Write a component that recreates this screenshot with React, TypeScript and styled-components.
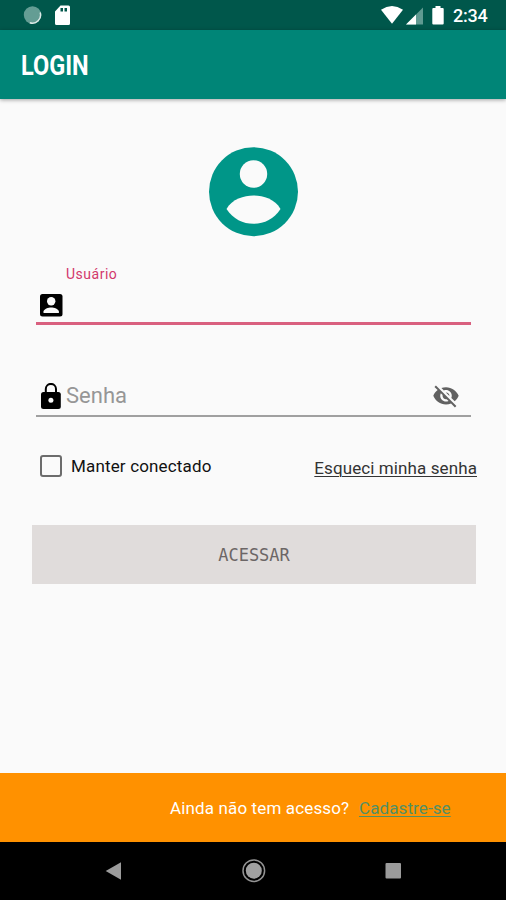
import React from "react";
import styled, { createGlobalStyle } from "styled-components";

const GlobalStyle = createGlobalStyle`
  *, *::before, *::after { box-sizing: border-box; }
  html, body { margin: 0; padding: 0; background: #fafafa; }
  body { font-family: Roboto, "Liberation Sans", sans-serif; }
  svg { display: block; flex: none; }
`;

const Screen = styled.div`
  display: flex;
  flex-direction: column;
  width: 506px;
  height: 900px;
  overflow: hidden;
  background: #fafafa;
`;

const StatusBar = styled.header`
  display: flex;
  align-items: center;
  flex: none;
  height: 30px;
  padding: 0 18px 0 23px;
  background: #00574b;
`;

const StatusGroup = styled.div<{ $end?: boolean }>`
  display: flex;
  align-items: center;
  margin-left: ${(p) => (p.$end ? "auto" : "0")};
`;

const Clock = styled.span`
  width: 35px;
  margin-left: 9px;
  padding-top: 2px;
  color: #fff;
  font-size: 18px;
  font-weight: 500;
  line-height: 20px;
  letter-spacing: -0.2px;
  white-space: nowrap;
`;

const AppBar = styled.div`
  display: flex;
  align-items: center;
  flex: none;
  height: 68.5px;
  padding: 4px 21px 0;
  background: #008577;
  box-shadow: 0 1px 4px rgba(0, 0, 0, 0.36);
`;

const Title = styled.h1`
  margin: 0;
  color: #fff;
  font-size: 28px;
  font-weight: 700;
  line-height: 32px;
  transform: scaleX(0.84);
  transform-origin: left center;
`;

const Content = styled.main`
  display: flex;
  flex-direction: column;
  flex: 1;
  padding: 48.5px 30px 0 32px;
`;

const Avatar = styled.div`
  display: flex;
  height: 90px;
  padding-left: 177px;
`;

const Field = styled.label<{ $active?: boolean }>`
  display: flex;
  flex-direction: column;
  margin: ${(p) => (p.$active ? "28px 5px 0 4px" : "53px 5px 0 4px")};
  border-bottom: ${(p) => (p.$active ? "3px solid #d9607f" : "2px solid #a0a0a0")};
`;

const FloatingLabel = styled.span`
  height: 18px;
  padding-left: 30px;
  color: #d2386c;
  font-size: 14px;
  line-height: 18px;
  letter-spacing: 0.5px;
`;

const FieldRow = styled.span<{ $height: number }>`
  display: flex;
  align-items: center;
  height: ${(p) => p.$height}px;
  padding: 0 11px 0 1px;
`;

const Placeholder = styled.span`
  flex: 1;
  margin-left: 1px;
  padding-bottom: 2px;
  color: #969696;
  font-size: 22px;
  line-height: 26px;
`;

const Options = styled.div`
  display: flex;
  align-items: center;
  height: 26px;
  margin-top: 36px;
  padding-left: 8px;
`;

const Checkbox = styled.span`
  width: 22px;
  height: 22px;
  margin-right: 9px;
  border: 2px solid #6c6c6c;
  border-radius: 3px;
`;

const OptionLabel = styled.span`
  color: #111;
  font-size: 17px;
  line-height: 22px;
  letter-spacing: 0.16px;
`;

const TextLink = styled.a<{ $color: string }>`
  color: ${(p) => p.$color};
  font-size: 17px;
  line-height: 22px;
  letter-spacing: 0.1px;
  text-decoration: underline;
  text-decoration-thickness: 1px;
  text-underline-offset: 2px;
  white-space: nowrap;
`;

const ForgotSlot = styled.div`
  margin-left: auto;
  margin-right: -1px;
  padding-top: 4px;
`;

const SubmitButton = styled.button`
  height: 59px;
  margin-top: 46px;
  padding: 0;
  border: 0;
  background: #e0dcdb;
  color: #6c6666;
  font: 17px/22px "DejaVu Sans Mono", monospace;
`;

const SignupBar = styled.footer`
  display: flex;
  align-items: center;
  flex: none;
  height: 69.5px;
  padding: 2px 0 0 170px;
  background: #ff9100;
`;

const SignupText = styled.span`
  width: 189px;
  color: #fff;
  font-size: 17px;
  line-height: 22px;
  letter-spacing: 0.14px;
  white-space: nowrap;
`;

const NavBar = styled.nav`
  display: flex;
  align-items: center;
  justify-content: space-between;
  flex: none;
  height: 58px;
  padding: 0 104px 0 105px;
  background: #000;
`;

const App = () => (
  <>
    <GlobalStyle />
    <Screen>
      <StatusBar>
        <StatusGroup>
          <svg width="19" height="20" viewBox="0 0 19 20">
            <circle cx="9.5" cy="10" r="8.7" fill="#649d94" />
            <path d="M17.2 7.5A8.2 8.2 0 0 1 6.8 17.7" fill="none" stroke="#dbe9e6" strokeWidth="1.5" />
          </svg>
          <svg width="40" height="22" viewBox="0 0 40 22">
            <path
              fill="#fff"
              fillRule="evenodd"
              d="M18.5 1.5h8q1.5 0 1.5 1.5v16.5q0 1.5-1.5 1.5h-12q-1.5 0-1.5-1.5V7.5zM18.500 4v3.500h2.500v-3.500zM22.500 4v3.500h2.500v-3.500z"
            />
          </svg>
        </StatusGroup>
        <StatusGroup $end>
          <svg width="63" height="20" viewBox="0 0 63 20">
            <path fill="#fff" d="M0 4.8Q11 -2.6 22 4.8L11 18.8z" />
            <path fill="#5f9a91" d="M42 2.5v17H25z" />
            <path fill="#fff" d="M35 9.5v10H25z" />
            <path fill="#fff" d="M54.5 1h5v2h2.200q1 0 1 1v14.500q0 1-1 1h-9.400q-1 0-1-1V4q0-1 1-1h2.200z" />
          </svg>
          <Clock>2:34</Clock>
        </StatusGroup>
      </StatusBar>

      <AppBar>
        <Title>LOGIN</Title>
      </AppBar>

      <Content>
        <Avatar>
          <svg width="90" height="90" viewBox="0 0 90 90">
            <circle cx="44.5" cy="44.7" r="44.5" fill="#009688" />
            <circle cx="44.5" cy="27" r="13.7" fill="#fafafa" />
            <path fill="#fafafa" d="M17.500 62C23 52 35 48.500 44.500 48.500S66 52 71.500 62C65 72 55 76.800 44.500 76.800S24 72 17.500 62z" />
          </svg>
        </Avatar>

        <Field $active>
          <FloatingLabel>Usuário</FloatingLabel>
          <FieldRow $height={39}>
            <svg width="28" height="32" viewBox="0 0 28 32">
              <rect x="3" y="7" width="22.5" height="22.5" rx="2.500" fill="#000" />
              <circle cx="14.2" cy="14.3" r="4.200" fill="#fafafa" />
              <path fill="#fafafa" d="M6.500 26v-1.400c0-2.700 5-4.200 7.700-4.200s7.700 1.500 7.700 4.200v1.400z" />
            </svg>
          </FieldRow>
        </Field>

        <Field>
          <FieldRow $height={37}>
            <svg width="28" height="28" viewBox="0 0 28 28">
              <rect x="4" y="9" width="19.8" height="17" rx="2.500" fill="#000" />
              <path d="M8.800 10V6a5 5 0 0 1 10.200 0v4" fill="none" stroke="#000" strokeWidth="2" />
              <circle cx="13.9" cy="17.300" r="2.500" fill="#fafafa" />
            </svg>
            <Placeholder>Senha</Placeholder>
            <svg width="28" height="30" viewBox="0 0 24 26" fill="#616161">
              <path d="M12 7c2.76 0 5 2.240 5 5 0 .65-.13 1.260-.36 1.830l2.920 2.920c1.510-1.260 2.700-2.890 3.430-4.750-1.730-4.390-6-7.500-11-7.500-1.400 0-2.740.25-3.980.7l2.160 2.160C10.740 7.130 11.350 7 12 7zM2 4.270l2.280 2.280.46.46C3.080 8.300 1.780 10.020 1 12c1.730 4.390 6 7.500 11 7.500 1.550 0 3.030-.3 4.380-.84l.42.42L19.730 22 21 20.730 3.270 3 2 4.270zM7.530 9.800l1.550 1.550c-.05.21-.08.43-.08.65 0 1.660 1.340 3 3 3 .22 0 .44-.03.65-.08l1.550 1.550c-.67.33-1.410.53-2.200.53-2.760 0-5-2.240-5-5 0-.79.2-1.530.53-2.200zm4.310-.78l3.150 3.150.02-.16c0-1.660-1.340-3-3-3l-.17.01z" />
            </svg>
          </FieldRow>
        </Field>

        <Options>
          <Checkbox />
          <OptionLabel>Manter conectado</OptionLabel>
          <ForgotSlot>
            <TextLink $color="#333">Esqueci minha senha</TextLink>
          </ForgotSlot>
        </Options>

        <SubmitButton>ACESSAR</SubmitButton>
      </Content>

      <SignupBar>
        <SignupText>Ainda não tem acesso?</SignupText>
        <TextLink $color="#528f65">Cadastre-se</TextLink>
      </SignupBar>

      <NavBar>
        <svg width="17" height="20" viewBox="0 0 17 20">
          <path d="M.7 10L16 1.200v17.600z" fill="#9b9b9b" />
        </svg>
        <svg width="26" height="26" viewBox="0 0 26 26">
          <circle cx="12.8" cy="12.700" r="10.800" fill="none" stroke="#939393" strokeWidth="1.500" />
          <circle cx="12.8" cy="12.700" r="8" fill="#a0a0a0" />
        </svg>
        <svg width="17" height="18" viewBox="0 0 17 18">
          <rect x=".5" y="1" width="15.5" height="15.500" rx="1" fill="#9b9b9b" />
        </svg>
      </NavBar>
    </Screen>
  </>
);

export default App;
